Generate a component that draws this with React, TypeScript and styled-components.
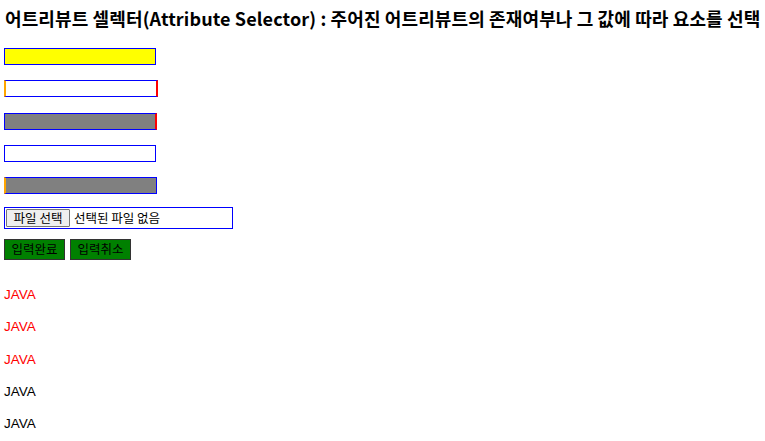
import React from "react";
import styled, { createGlobalStyle, css } from "styled-components";

const Global = createGlobalStyle`
  html, body { margin: 0; padding: 0; background: #fff; }
  body { font-family: "Noto Sans CJK KR", "Noto Sans", sans-serif; color: #000; }
`;

const Page = styled.div`
  padding: 0 4px;
  display: flex;
  flex-direction: column;
  align-items: flex-start;
`;

const Heading = styled.h3`
  margin: 6px 0 0 1px;
  font-size: 18px;
  line-height: 24px;
  font-weight: 700;
  white-space: nowrap;
  letter-spacing: 0.12px;
`;

const InputStack = styled.div`
  margin-top: 18px;
  display: flex;
  flex-direction: column;
  gap: 15.25px;
`;

const TextBox = styled.input<{ $bg?: string; $left?: boolean; $right?: boolean }>`
  box-sizing: content-box;
  width: 150px;
  height: 15px;
  padding: 0;
  margin: 0;
  outline: none;
  border: 1px solid #0000ff;
  background: ${(p) => p.$bg ?? "#fff"};
  ${(p) => p.$left && css`border-left: 2px solid #ffa500;`}
  ${(p) => p.$right && css`border-right: 2px solid #ff0000;`}
`;

const FileBox = styled.div`
  margin-top: 13px;
  box-sizing: border-box;
  width: 229px;
  height: 22px;
  border: 1px solid #0000ff;
  display: flex;
  align-items: center;
  gap: 4px;
  padding-left: 1px;
`;

const FileButton = styled.span`
  box-sizing: border-box;
  height: 18px;
  width: 64px;
  border: 1px solid #767676;
  background: #efefef;
  border-radius: 1px;
  display: flex;
  align-items: center;
  justify-content: center;
  font-size: 12.5px;
  line-height: 1;
`;

const FileLabel = styled.span`
  font-size: 12.5px;
  line-height: 1;
`;

const ButtonRow = styled.div`
  margin-top: 10px;
  display: flex;
  gap: 5px;
`;

const GreenButton = styled.button`
  box-sizing: border-box;
  width: 61px;
  height: 21px;
  padding: 0;
  margin: 0;
  background: #008000;
  border: 1px solid #333;
  color: #000;
  font-family: "Noto Sans CJK KR", sans-serif;
  font-size: 12.5px;
  line-height: 1;
`;

const JavaList = styled.div`
  margin-top: 26px;
  display: flex;
  flex-direction: column;
  gap: 14.25px;
`;

const Java = styled.p<{ $red?: boolean }>`
  margin: 0;
  font-family: "Liberation Sans", Arial, sans-serif;
  font-size: 13.5px;
  line-height: 18px;
  color: ${(p) => (p.$red ? "#ff0000" : "#000")};
`;

export default function App() {
  return (
    <>
      <Global />
      <Page>
        <Heading>
          어트리뷰트 셀렉터(Attribute Selector) : 주어진 어트리뷰트의 존재여부나 그 값에 따라 요소를 선택
        </Heading>
        <InputStack>
          <TextBox readOnly $bg="#ffff00" />
          <TextBox readOnly $left $right />
          <TextBox readOnly $bg="#808080" $right />
          <TextBox readOnly />
          <TextBox readOnly $bg="#808080" $left />
        </InputStack>
        <FileBox>
          <FileButton>파일 선택</FileButton>
          <FileLabel>선택된 파일 없음</FileLabel>
        </FileBox>
        <ButtonRow>
          <GreenButton>입력완료</GreenButton>
          <GreenButton>입력취소</GreenButton>
        </ButtonRow>
        <JavaList>
          <Java $red>JAVA</Java>
          <Java $red>JAVA</Java>
          <Java $red>JAVA</Java>
          <Java>JAVA</Java>
          <Java>JAVA</Java>
        </JavaList>
      </Page>
    </>
  );
}
